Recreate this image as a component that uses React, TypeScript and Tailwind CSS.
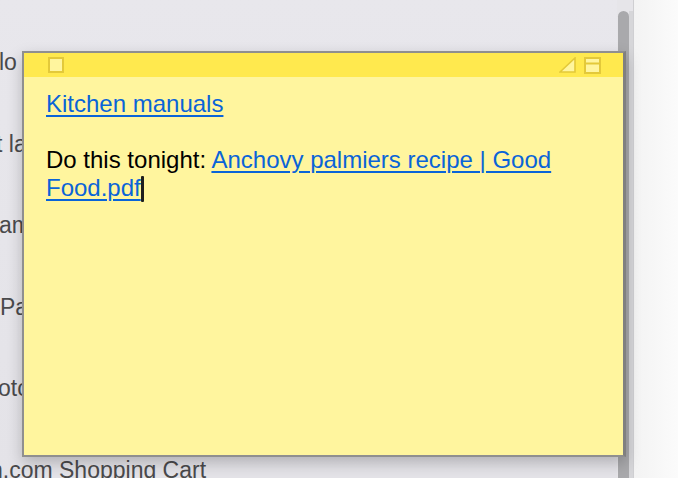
import { useState } from "react";

type Row = { text: string; shift: string };

const rows: Row[] = [
    { text: "lo", shift: "ml-[-1px]" },
    { text: "t la", shift: "ml-[-4px]" },
    { text: "am", shift: "ml-[-1px]" },
    { text: "Pa", shift: "ml-[0px]" },
    { text: "otc", shift: "ml-[-2px]" },
    { text: "n.com Shopping Cart", shift: "ml-[-10px]" },
];

const StickyNote = () => {
    const [focused] = useState(true);

    return (
        <div className="absolute left-[22px] top-[51px] w-[604px] h-[406px] border-2 border-[#8f8f8f] border-r-[3px] border-r-[#808080] bg-[#fff59e] shadow-[0_6px_14px_rgba(0,0,0,0.22)] flex flex-col">
            <div className="h-[24px] bg-[#ffe94e] flex items-center justify-between pl-[24px] pr-[22px] flex-shrink-0">
                <div className="w-[16px] h-[16px] border-2 border-[#e3c93a] bg-[#fff59e]" />
                <div className="flex items-center gap-[8px]">
                    <svg width="17" height="16" viewBox="0 0 17 16">
                        <path d="M1 15 L16 1 L16 15 Z" fill="#fff59e" stroke="#e3c93a" strokeWidth="1.6" strokeLinejoin="miter" />
                    </svg>
                    <svg width="17" height="17" viewBox="0 0 17 17">
                        <rect x="1" y="1" width="15" height="15" fill="#fff59e" stroke="#e3c93a" strokeWidth="2" />
                        <line x1="1" y1="6.5" x2="16" y2="6.5" stroke="#e3c93a" strokeWidth="2" />
                    </svg>
                </div>
            </div>
            <div className="pt-[13px] pl-[22px] pr-[22px] text-[24px] leading-[28px] text-black font-['Liberation_Sans',Arial,sans-serif]">
                <p><a className="text-[#0a64d8] underline decoration-[2px] underline-offset-[3px]">Kitchen manuals</a></p>
                <p>&nbsp;</p>
                <p>
                    Do this tonight:{" "}
                    <a className="text-[#0a64d8] underline decoration-[2px] underline-offset-[3px]">Anchovy palmiers recipe | Good Food.pdf</a>
                    {focused && <span className="inline-block w-[3px] h-[26px] bg-[#1e1e1e] align-[-6px] rounded-[1px]" />}
                </p>
            </div>
        </div>
    );
};

export default function App() {
    return (
        <div className="relative w-[678px] h-[478px] overflow-hidden flex bg-[#e8e7eb] font-['Liberation_Sans',Arial,sans-serif]">
            <div className="flex-1 bg-gradient-to-b from-[#e8e7ec] to-[#e4e3e8] pt-[48px] overflow-hidden">
                {rows.map((row, i) => (
                    <div key={i} className="h-[81.6px] whitespace-nowrap">
                        <span className={`block ${row.shift} text-[23px] leading-[28px] text-[#4a4a4c]`}>{row.text}</span>
                    </div>
                ))}
            </div>
            <div className="w-[16px] pt-[11px] pl-[1px] flex-shrink-0 bg-[#e6e5e9] flex">
                <div className="w-[11px] h-full rounded-t-full bg-[#a9a9ac]" />
                <div className="w-[4px] bg-[#d6d6d9]" />
            </div>
            <div className="w-[45px] flex-shrink-0 border-l border-[#cfcfd2] bg-gradient-to-r from-[#f3f3f3] to-[#fbfbfb]" />
            <StickyNote />
        </div>
    );
}
